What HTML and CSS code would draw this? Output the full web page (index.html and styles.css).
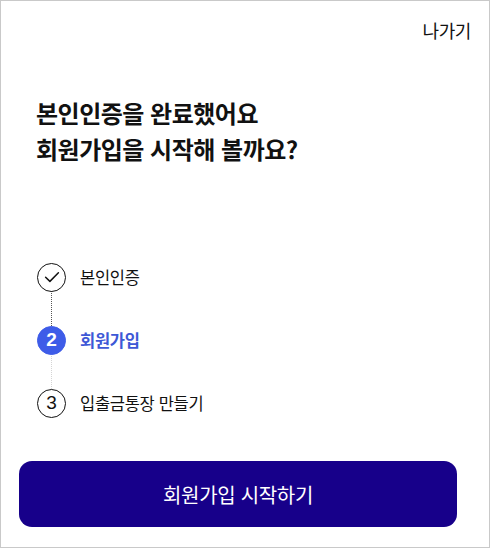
FILE: index.html
```html
<!DOCTYPE html>
<html lang="ko">
<head>
    <meta charset="UTF-8">
    <meta name="viewport" content="width=device-width, initial-scale=1.0">
    <title>회원가입</title>
    <link rel="stylesheet" href="styles.css">
</head>
<body>
    <div class="screen">
        <!-- 상단 -->
        <div class="top-bar">
            <a class="exit-link" href="#">나가기</a>
        </div>

        <h1 class="title">본인인증을 완료했어요<br>회원가입을 시작해 볼까요?</h1>

        <!-- 단계 -->
        <div class="steps">
            <div class="step done">
                <span class="step-mark">
                    <svg width="18" height="18" viewBox="0 0 18 18" fill="none">
                        <path d="M2.6 9.2l4.3 4.2 8.5-8.6" stroke="#111" stroke-width="1.5" stroke-linecap="round" stroke-linejoin="round"/>
                    </svg>
                </span>
                <span class="step-label">본인인증</span>
            </div>
            <div class="step-line dark"></div>
            <div class="step current">
                <span class="step-mark">2</span>
                <span class="step-label">회원가입</span>
            </div>
            <div class="step-line"></div>
            <div class="step">
                <span class="step-mark">3</span>
                <span class="step-label">입출금통장 만들기</span>
            </div>
        </div>

        <button class="start-button" type="button">회원가입 시작하기</button>
    </div>
</body>
</html>
```

FILE: styles.css
```css
* {
    box-sizing: border-box;
}
body {
    margin: 0;
    padding: 0;
    background-color: #fff;
    font-family: "Noto Sans CJK KR", "Noto Sans", sans-serif;
    color: #111;
}
.screen {
    display: flex;
    flex-direction: column;
    height: 548px;
    border: 1px solid #c9c9c9;
}
.top-bar {
    display: flex;
    justify-content: flex-end;
    padding: 18px 18px 0 0;
    height: 59px;
}
.exit-link {
    font-size: 18px;
    line-height: 22px;
    color: #111;
    text-decoration: none;
    letter-spacing: -0.4px;
}
.title {
    margin: 35px 0 0 35px;
    font-size: 24px;
    line-height: 36px;
    font-weight: 700;
    letter-spacing: -0.5px;
}
.steps {
    margin: 96px 0 0 36px;
}
.step {
    display: flex;
    align-items: center;
    gap: 14px;
    height: 28px;
}
.step-mark {
    display: flex;
    align-items: center;
    justify-content: center;
    width: 29px;
    height: 29px;
    border: 1.5px solid #111;
    border-radius: 50%;
    font-family: "Liberation Sans", Arial, sans-serif;
    font-size: 19px;
}
.step-label {
    font-size: 16.5px;
    letter-spacing: -0.3px;
}
.step.current .step-mark {
    background-color: #3e5ce8;
    border-color: #3e5ce8;
    color: #fff;
    font-weight: 700;
}
.step.current .step-label {
    color: #3d58d6;
    font-weight: 700;
}
.step-line {
    width: 0;
    height: 35px;
    margin-left: 13.75px;
    border-left: 1.5px dotted #d4d4d4;
}
.step-line.dark {
    border-left-color: #555;
}
.start-button {
    margin: auto 32px 20px 18px;
    height: 66px;
    border: none;
    border-radius: 13px;
    background-color: #17008a;
    color: #fff;
    font-family: inherit;
    font-size: 20px;
    letter-spacing: -0.3px;
    cursor: pointer;
}
```
